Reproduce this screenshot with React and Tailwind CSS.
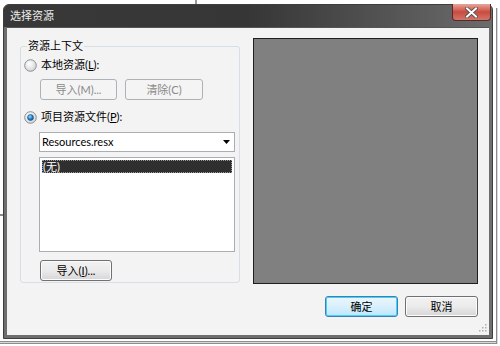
import React from "react";

const F = { fontFamily: 'Lato, "Noto Sans CJK SC", sans-serif' };

function Radio({ checked }) {
  return (
    <svg width="13" height="13" viewBox="0 0 13 13" className="shrink-0">
      <defs>
        <radialGradient id={checked ? "rgc" : "rgu"} cx="0.4" cy="0.35" r="0.7">
          <stop offset="0" stopColor="#ffffff" />
          <stop offset="1" stopColor="#cfd2d6" />
        </radialGradient>
        <radialGradient id="dot" cx="0.4" cy="0.35" r="0.7">
          <stop offset="0" stopColor="#9fe0ff" />
          <stop offset="0.5" stopColor="#2a8ad4" />
          <stop offset="1" stopColor="#0b4f8f" />
        </radialGradient>
      </defs>
      <circle cx="6.5" cy="6.5" r="5.8" fill={`url(#${checked ? "rgc" : "rgu"})`} stroke="#8e8f8f" strokeWidth="1" />
      {checked && <circle cx="6.5" cy="6.5" r="3" fill="url(#dot)" stroke="#1c5180" strokeWidth="0.6" />}
    </svg>
  );
}

function Btn({ children, className = "", disabled, def }) {
  return (
    <div
      className={
        "flex items-center justify-center rounded-[3px] border text-[11px] leading-none " +
        (disabled
          ? "border-[#adb2b5] bg-[#f4f4f4] text-[#8a8a8a] "
          : def
          ? "border-[#3c7fb1] bg-gradient-to-b from-[#eaf6fd] via-[#d9f0fc] to-[#bee6fd] text-black shadow-[inset_0_0_0_1px_#48d0f8] "
          : "border-[#707070] bg-gradient-to-b from-[#f2f2f2] via-[#ebebeb] to-[#d6d6d6] text-black shadow-[inset_0_0_0_1px_#fcfcfc] ") +
        className
      }
    >
      {children}
    </div>
  );
}

export default function App() {
  return (
    <div className="relative w-[500px] h-[346px] overflow-hidden bg-white" style={F}>
      {/* background window edges */}
      <div className="absolute left-[195px] top-0 w-[2px] h-[5px] bg-[#9a9a9a]" />
      <div className="absolute left-0 top-[214px] w-[3px] h-[2px] bg-[#8a8a8a]" />
      <div className="absolute left-0 top-[341px] w-[498px] h-[3px] border-y border-[#8c8c8c] bg-[#d8d8d8]" />
      <div className="absolute left-[496px] top-[8px] w-[2px] h-[336px] border-l border-[#8c8c8c] bg-[#d8d8d8]" />

      {/* window */}
      <div className="relative ml-[3px] mt-[4px] w-[490px] h-[335px] rounded-t-[6px] border border-[#3e3e3e] bg-[#6e6e6e] flex flex-col">
        {/* title bar */}
        <div className="h-[22px] shrink-0 rounded-t-[5px] bg-gradient-to-r from-[#383838] via-[#363636] to-[#6c6c6c] flex items-start">
          <div className="pl-[6px] pt-[4px] text-[11px] leading-[14px] text-[#ececec]">选择资源</div>
          <div className="ml-auto mr-[1px] mt-[-1px] w-[39px] h-[17px] rounded-b-[4px] border border-[#5a2a2a] border-t-0 bg-gradient-to-b from-[#e8a59b] via-[#c94a3e] to-[#d2756a] flex items-center justify-center">
            <svg width="13" height="11" viewBox="0 0 13 11">
              <path d="M2 1.5 L11 9.5 M11 1.5 L2 9.5" stroke="#4a4a4a" strokeWidth="3.6" strokeLinecap="square" />
              <path d="M2 1.5 L11 9.5 M11 1.5 L2 9.5" stroke="#ffffff" strokeWidth="2" strokeLinecap="square" />
            </svg>
          </div>
        </div>

        {/* client area */}
        <div className="relative mx-[3px] mb-[3px] flex-1 bg-[#f3f3f3] border-t border-[#555] flex flex-col pt-[10px] pl-[13px]">
          <div className="flex items-start gap-[13px]">
            {/* group box */}
            <div className="relative mt-[8px] w-[220px] h-[237px] rounded-[3px] border border-[#d5dfe5] pt-[10px] pl-[3px] flex flex-col">
              <div className="absolute left-[6px] top-[-8px] px-[1px] bg-[#f3f3f3] text-[11px] leading-[14px] text-black">资源上下文</div>

              <div className="h-[16px] flex items-center gap-[4px] text-[11px] text-black">
                <Radio />
                <span>本地资源(<span className="underline">L</span>):</span>
              </div>

              <div className="mt-[6px] ml-[16px] flex gap-[8px]">
                <Btn disabled className="w-[77px] h-[21px]">导入(M)...</Btn>
                <Btn disabled className="w-[78px] h-[21px]">清除(C)</Btn>
              </div>

              <div className="mt-[9px] h-[16px] flex items-center gap-[4px] text-[11px] text-black">
                <Radio checked />
                <span>项目资源文件(<span className="underline">P</span>):</span>
              </div>

              <div className="mt-[7px] ml-[15px] w-[196px] h-[20px] border border-[#abadb3] bg-white flex items-center pl-[2px] pr-[4px] text-[11px] text-black">
                <span>Resources.resx</span>
                <svg className="ml-auto" width="7" height="4" viewBox="0 0 7 4">
                  <path d="M0 0 H7 L3.5 4 Z" fill="#000" />
                </svg>
              </div>

              <div className="mt-[5px] ml-[15px] w-[196px] h-[95px] border border-[#abadb3] bg-white p-[2px]">
                <div className="h-[13px] bg-[#2f2f2f] outline outline-1 outline-dotted outline-[#9a9a9a] -outline-offset-1 text-[11px] leading-[13px] text-white pl-[1px]">(无)</div>
              </div>

              <div className="mt-[8px] ml-[16px]">
                <Btn className="w-[72px] h-[21px]">导入(<span className="underline">I</span>)...</Btn>
              </div>
            </div>

            {/* preview */}
            <div className="w-[225px] h-[246px] bg-[#808080] border border-[#1f1f1f]" />
          </div>

          <div className="mt-[12px] pr-[11px] flex justify-end gap-[7px]">
            <Btn def className="w-[73px] h-[21px]">确定</Btn>
            <Btn className="w-[73px] h-[21px]">取消</Btn>
          </div>

          {/* size grip */}
          <svg className="absolute right-[2px] bottom-[2px]" width="10" height="10" viewBox="0 0 10 10">
            {[[8, 0], [8, 3], [5, 3], [8, 6], [5, 6], [2, 6]].map(([x, y], i) => (
              <rect key={i} x={x} y={y + 1} width="1.5" height="1.5" fill="#b0b0b0" />
            ))}
          </svg>
        </div>
      </div>
    </div>
  );
}
